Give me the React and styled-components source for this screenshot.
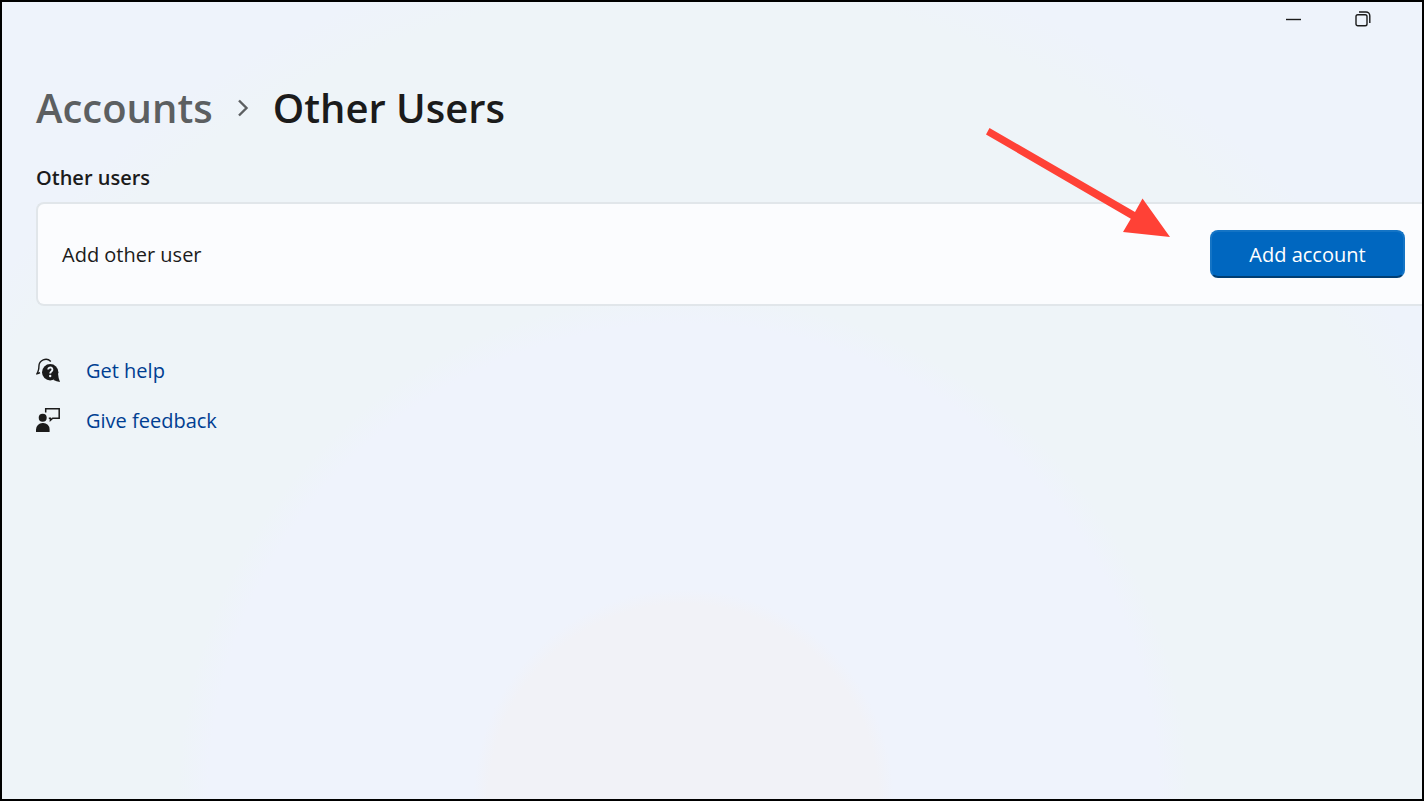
import React from "react";
import styled, { createGlobalStyle } from "styled-components";


const links = [
  { label: "Get help", icon: "help" },
  { label: "Give feedback", icon: "feedback" },
];

const HelpIcon = ()=>(
    <svg width="24" height="24" viewBox="0 0 24 24" aria-hidden="true">
        <path d="M14.800 3.400A7 7 0 0 0 2.900 8.300q.1 3-.9 5.200-.4 1.300-1 2.200 1.600-.1 3-1" fill="none" stroke="#1b1b1b" strokeWidth="1.400"/>
        <circle cx="14.200" cy="14.200" r="8.200" fill="#1b1b1b"/>
        <path d="M22 15.500q.3 4.500 2 8.400-3.500-.3-6.500-2z" fill="#1b1b1b"/>
        <path d="M12.200 11.500a2.100 2.100 0 1 1 3.400 1.700c-.8.600-1.400 1-1.400 2.300" fill="none" stroke="#eff4f9" strokeWidth="1.900"/>
        <circle cx="14.200" cy="18" r="1.200" fill="#eff4f9"/>
    </svg>
)

const FeedbackIcon = ()=>(
    <svg width="24" height="24" viewBox="0 0 24 24" aria-hidden="true">
        <circle cx="6.700" cy="9.800" r="4" fill="#1b1b1b"/>
        <path d="M0 24v-2.500A6.500 6.500 0 0 1 6.500 15h.8a6.300 6.300 0 0 1 6.300 6.300V24z" fill="#1b1b1b"/>
        <path d="M9.700 4.600V.8h13.500v9.500h-6.500l-2.300 2v-2h-1.600" fill="none" stroke="#1b1b1b" strokeWidth="1.500"/>
    </svg>
)

const App = ()=>{
    return(
        <Window>
            <GlobalStyle />
            <TitleBar>
                <CaptionButton aria-label="Minimize">
                    <svg width="16" height="16" viewBox="0 0 16 16"><path d="M0 8.500h15" stroke="#1b1b1b" strokeWidth="1.400"/></svg>
                </CaptionButton>
                <CaptionButton aria-label="Restore">
                    <svg width="16" height="16" viewBox="0 0 16 16" fill="none" stroke="#1b1b1b" strokeWidth="1.400">
                        <rect x="1" y="3.700" width="11" height="11" rx="1.800"/>
                        <path d="M4 1h7a3.800 3.800 0 0 1 3.800 3.800V12"/>
                    </svg>
                </CaptionButton>
            </TitleBar>
            <Content>
                <Breadcrumb>
                    <Parent href="#accounts">Accounts</Parent>
                    <svg width="12" height="20" viewBox="0 0 12 20" aria-hidden="true">
                        <path d="M2 2.500l7.500 7.500L2 17.500" fill="none" stroke="#5c5f61" strokeWidth="2.400"/>
                    </svg>
                    <Title>Other Users</Title>
                </Breadcrumb>
                <SectionTitle>Other users</SectionTitle>
                <Card>
                    <CardLabel>Add other user</CardLabel>
                    <AddButton>Add account</AddButton>
                    <Arrow width="184" height="110" viewBox="0 0 184 110" aria-hidden="true">
                        <path d="M3.500 0L149 84 156.500 70.500 184 109 137 104 144.800 90.700 0 6.500z" fill="#ff4136"/>
                    </Arrow>
                </Card>
                <Links>
                    {links.map((l)=>(
                        <HelpLink href={"#" + l.icon} key={l.icon}>
                            {l.icon === "help" ? <HelpIcon /> : <FeedbackIcon />}
                            <span>{l.label}</span>
                        </HelpLink>
                    ))}
                </Links>
            </Content>
        </Window>
    )
}

const GlobalStyle = createGlobalStyle`
  *{
    box-sizing:border-box;
  }
  body{
    margin:0;
    font-family:"Open Sans", "Noto Sans", sans-serif;
    font-size:20px;
    line-height:28px;
    color:#1b1b1b;
  }
`;

const Window = styled.div`
  min-height:100vh;
  border:2px solid #000;
  overflow:hidden;
  background:radial-gradient(circle at 48% 100%, #f1f2f7 195px, #eff3fc 210px, #eff3fc 475px, #eef4f8 505px, #eef4f8 810px, #eef3fb 860px);
`;

const TitleBar = styled.div`
  display:flex;
  justify-content:flex-end;
  height:34px;
  padding-right:25px;
`;

const CaptionButton = styled.button`
  display:flex;
  align-items:center;
  justify-content:center;
  width:69px;
  padding:0;
  border:none;
  background:transparent;
`;

const Content = styled.main`
  padding:44px 0 0 34px;
`;

const Breadcrumb = styled.nav`
  display:flex;
  align-items:center;
  gap:24px;
  font-size:40px;
  line-height:56px;
  font-weight:600;
`;

const Parent = styled.a`
  color:#5c5f61;
  text-decoration:none;
`;

const Title = styled.h1`
  margin:0;
  font-size:40px;
  font-weight:600;
`;

const SectionTitle = styled.h2`
  margin:28px 0 10px;
  font-size:20px;
  line-height:28px;
  font-weight:600;
`;

const Card = styled.section`
  position:relative;
  display:flex;
  align-items:center;
  justify-content:space-between;
  min-height:104px;
  padding:0 17px 0 24px;
  border:2px solid #e1e6ea;
  border-right:none;
  border-radius:8px 0 0 8px;
  background:#fbfcfe;
`;

const CardLabel = styled.span`
  padding-top:2px;
`;

const AddButton = styled.button`
  width:195px;
  height:48px;
  padding:2px 0 0;
  border:2px solid #1474c5;
  border-bottom-color:#003e73;
  border-radius:8px;
  background:#0067c0;
  color:#fff;
  font:inherit;
`;

// pointer laid over the card, aimed at the add button
const Arrow = styled.svg`
  position:absolute;
  top:-76px;
  right:252px;
  pointer-events:none;
`;

const Links = styled.div`
  display:flex;
  flex-direction:column;
  align-items:flex-start;
  gap:20px;
  margin-top:49px;
`;

const HelpLink = styled.a`
  display:flex;
  align-items:center;
  gap:26px;
  color:#003e92;
  text-decoration:none;
  span{
    padding-top:2px;
  }
`;

export default App;
